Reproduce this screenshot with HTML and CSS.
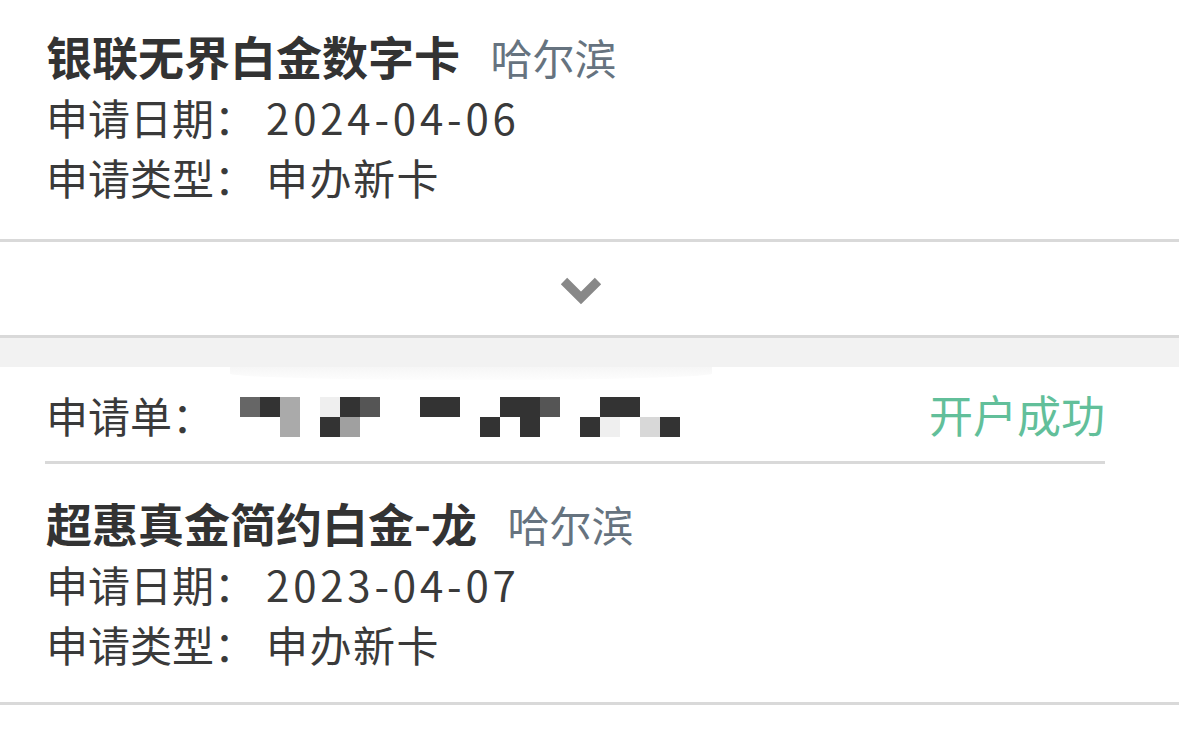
FILE: index.html
```html
<!DOCTYPE html>
<html lang="zh-CN">
<head>
    <meta charset="UTF-8">
    <meta name="viewport" content="width=device-width, initial-scale=1.0">
    <title>申请记录</title>
    <link rel="stylesheet" href="styles.css">
</head>
<body>

<div class="record">
    <div class="record-body">
        <div class="card-title">银联无界白金数字卡 <span class="city">哈尔滨</span></div>
        <div class="info-row"><span class="label">申请日期：</span><span class="date">2024-04-06</span></div>
        <div class="info-row"><span class="label">申请类型：</span><span class="type">申办新卡</span></div>
    </div>
</div>

<div class="toggle">
    <svg class="chevron" width="44" height="32" viewBox="0 0 44 32">
        <polyline points="5,6 22,23 39,6" fill="none" stroke="#888888" stroke-width="9"></polyline>
    </svg>
</div>

<div class="gap"></div>

<div class="record second">
    <div class="shade"></div>
    <div class="record-head">
        <span class="label">申请单：</span>
        <div class="masked">
            <span class="c2"></span><span class="c4"></span><span class="c6"></span><span></span><span class="c9"></span><span class="c4"></span><span class="c3"></span><span></span><span></span><span class="c4"></span><span class="c4"></span><span></span><span></span><span class="c4"></span><span class="c4"></span><span class="c3"></span><span></span><span></span><span class="c4"></span><span class="c4"></span><span></span><span></span>
            <span></span><span></span><span class="c6"></span><span></span><span class="c4"></span><span class="c5"></span><span></span><span></span><span></span><span></span><span></span><span></span><span class="c4"></span><span></span><span class="c4"></span><span></span><span></span><span class="c4"></span><span class="c9"></span><span></span><span class="c8"></span><span class="c4"></span>
        </div>
        <span class="status">开户成功</span>
    </div>
    <div class="record-body">
        <div class="card-title">超惠真金简约白金-龙 <span class="city">哈尔滨</span></div>
        <div class="info-row"><span class="label">申请日期：</span><span class="date">2023-04-07</span></div>
        <div class="info-row"><span class="label">申请类型：</span><span class="type">申办新卡</span></div>
    </div>
</div>

<div class="footer-space"></div>

</body>
</html>
```

FILE: styles.css
```css
body {
    margin: 0;
    background-color: #ffffff;
    font-family: "Noto Sans CJK SC", "Noto Sans", sans-serif;
    color: #333333;
}
.record {
    background-color: white;
    border-bottom: 3px solid #d9d9d9;
}
.record.second {
    position: relative;
}
.record-body {
    padding: 25px 45px 32px 46px;
}
.card-title {
    font-size: 46px;
    font-weight: bold;
    line-height: 60px;
    color: #333333;
}
.city {
    font-size: 42px;
    font-weight: normal;
    color: #66737f;
    margin-left: 20px;
}
.info-row {
    font-size: 42px;
    line-height: 60px;
    color: #3a3a3a;
}
.info-row .label {
    margin-right: 10px;
}
.date {
    letter-spacing: 3.8px;
}
.type {
    letter-spacing: 1.5px;
}
.toggle {
    height: 93px;
    display: flex;
    align-items: center;
    justify-content: center;
    border-bottom: 3px solid #d9d9d9;
    background-color: white;
}
.chevron {
    display: block;
    margin-right: 17px;
    margin-top: 4px;
}
.gap {
    height: 29px;
    background-color: #f2f2f2;
}
.shade {
    position: absolute;
    left: 230px;
    top: 0;
    width: 482px;
    height: 13px;
    border-radius: 0 0 50% 50%;
    background: linear-gradient(#f6f6f6, #fdfdfd);
}
.record-head {
    display: flex;
    align-items: center;
    margin: 0 74px 0 45px;
    height: 94px;
    border-bottom: 3px solid #d9d9d9;
    font-size: 42px;
    color: #3a3a3a;
}
.record-head .label {
    margin-left: 1px;
    width: 194px;
}
.masked {
    display: grid;
    grid-template-columns: repeat(22, 20px);
    grid-template-rows: 20px 20px;
    margin-top: 6px;
}
.c2 { background-color: #666666; }
.c3 { background-color: #555555; }
.c4 { background-color: #333333; }
.c5 { background-color: #a0a0a0; }
.c6 { background-color: #aaaaaa; }
.c8 { background-color: #d8d8d8; }
.c9 { background-color: #efefef; }
.status {
    margin-left: auto;
    font-size: 44px;
    color: #62bf9a;
}
.record.second .record-body {
    padding-top: 28px;
    padding-bottom: 28px;
}
.footer-space {
    height: 40px;
}
```
